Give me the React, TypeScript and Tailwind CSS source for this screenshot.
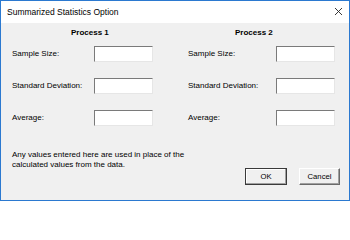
import React from "react";

const font = { fontFamily: '"Liberation Sans", Arial, sans-serif' };

function Field() {
  return (
    <div className="w-[59px] h-[16px] bg-white border-t-[1.5px] border-l-[1.5px] border-b border-r border-t-[#7a7a7a] border-l-[#7a7a7a] border-b-[#e6e6e6] border-r-[#e6e6e6]" />
  );
}

function Row({ label, labelW }: { label: string; labelW: string }) {
  return (
    <div className="flex items-center h-[16px]">
      <div className={`${labelW} text-[8px] leading-[10px] text-black`}>{label}</div>
      <Field />
    </div>
  );
}

export default function App() {
  return (
    <div
      className="w-[350px] h-[201px] border border-[#2b79d0] flex flex-col bg-[#f0f0f0] overflow-hidden"
      style={font}
    >
      <div className="h-[22px] shrink-0 bg-white flex items-center justify-between pl-[6px] pr-[6px]">
        <span className="text-[8.5px] leading-[10px] text-black">Summarized Statistics Option</span>
        <svg width="9" height="9" viewBox="0 0 9 9" className="mb-[1px]">
          <path d="M1 1 L8 8 M8 1 L1 8" stroke="#222" strokeWidth="0.9" fill="none" />
        </svg>
      </div>
      <div className="flex-1 flex flex-col pt-[5px] pl-[11px] pr-[9px]">
        <div className="flex gap-[35px]">
          <div className="w-[141px] flex flex-col">
            <div className="ml-[59px] text-[8px] leading-[10px] font-bold text-black">Process 1</div>
            <div className="mt-[8px] flex flex-col gap-[16px]">
              <Row label="Sample Size:" labelW="w-[82px]" />
              <Row label="Standard Deviation:" labelW="w-[82px]" />
              <Row label="Average:" labelW="w-[82px]" />
            </div>
          </div>
          <div className="w-[147px] flex flex-col">
            <div className="ml-[47px] text-[8px] leading-[10px] font-bold text-black">Process 2</div>
            <div className="mt-[8px] flex flex-col gap-[16px]">
              <Row label="Sample Size:" labelW="w-[88px]" />
              <Row label="Standard Deviation:" labelW="w-[88px]" />
              <Row label="Average:" labelW="w-[88px]" />
            </div>
          </div>
        </div>
        <div className="mt-[24px] flex items-start justify-between">
          <div className="text-[8px] leading-[10px] text-black">
            <div>Any values entered here are used in place of the</div>
            <div>calculated values from the data.</div>
          </div>
          <div className="pt-[18px] flex gap-[12px]">
            <button className="w-[42px] h-[17px] bg-[#f0f0f0] border border-[#3a3a3a] shadow-[inset_-1px_-1px_0_#a0a0a0,inset_1px_1px_0_#ffffff] text-[7.7px] leading-[10px] text-black flex items-center justify-center">
              OK
            </button>
            <button className="w-[41px] h-[17px] bg-[#f0f0f0] border-t border-l border-b border-r border-t-white border-l-white border-b-[#6a6a6a] border-r-[#6a6a6a] shadow-[inset_-1px_-1px_0_#a0a0a0] text-[7.7px] leading-[10px] text-black flex items-center justify-center">
              Cancel
            </button>
          </div>
        </div>
      </div>
    </div>
  );
}
